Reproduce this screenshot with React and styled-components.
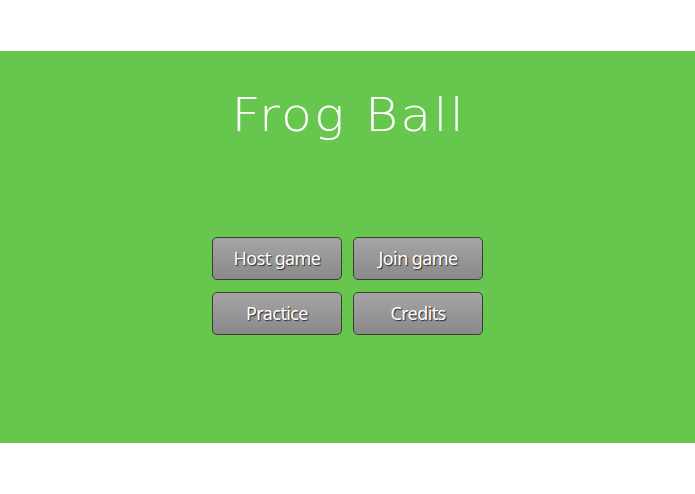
import React from "react";
import styled, { createGlobalStyle } from "styled-components";

const Global = createGlobalStyle`
  html, body { margin: 0; padding: 0; background: #ffffff; }
  body { width: 695px; height: 494px; overflow: hidden; }
`;

const Page = styled.div`
  width: 695px;
  height: 494px;
  padding-top: 51px;
  box-sizing: border-box;
`;

const Stage = styled.main`
  height: 392px;
  background: #66c64e;
  display: flex;
  flex-direction: column;
  align-items: center;
`;

const Title = styled.h1`
  margin: 36px 0 0;
  height: 56px;
  padding-left: 2px;
  font-family: "DejaVu Sans", "Lato", sans-serif;
  font-weight: 200;
  font-size: 46px;
  line-height: 56px;
  color: #ffffff;
  letter-spacing: 2px;
  transform: scaleX(1.1);
`;

const Menu = styled.div`
  margin-top: 94px;
  display: grid;
  grid-template-columns: 130px 130px;
  column-gap: 11px;
  row-gap: 12px;
`;

const MenuButton = styled.button`
  height: 43px;
  box-sizing: border-box;
  border: 1px solid #3a3d38;
  border-radius: 5px;
  background: linear-gradient(#a5a5a5, #898989);
  color: #ffffff;
  font-family: "Noto Sans", "Open Sans", sans-serif;
  font-size: 18px;
  letter-spacing: -0.6px;
  text-shadow: 1px 1px 1px #2a2a2a;
  padding: 0 0 2px;
  cursor: pointer;
`;

export default function App() {
  return (
    <>
      <Global />
      <Page>
        <Stage>
          <Title>Frog Ball</Title>
          <Menu>
            <MenuButton>Host game</MenuButton>
            <MenuButton>Join game</MenuButton>
            <MenuButton>Practice</MenuButton>
            <MenuButton>Credits</MenuButton>
          </Menu>
        </Stage>
      </Page>
    </>
  );
}
